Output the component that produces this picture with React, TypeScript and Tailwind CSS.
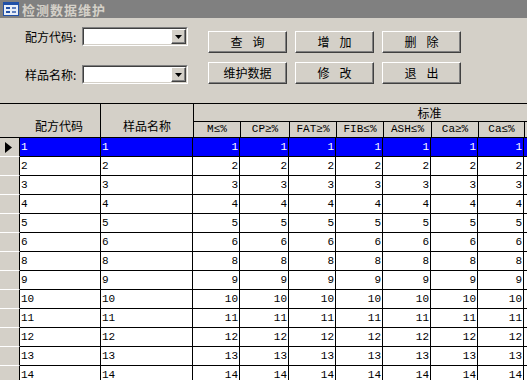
import React from "react";

const rows = [1, 2, 3, 4, 5, 6, 8, 9, 10, 11, 12, 13, 14];
const subCols = [
  { label: "M≤%", w: "w-[47px]" },
  { label: "CP≥%", w: "w-[49px]" },
  { label: "FAT≥%", w: "w-[47px]" },
  { label: "FIB≤%", w: "w-[47px]" },
  { label: "ASH≤%", w: "w-[48px]" },
  { label: "Ca≥%", w: "w-[47px]" },
  { label: "Ca≤%", w: "w-[46px]" },
];

const cjk = "font-['SimSun','Noto_Sans_CJK_SC',sans-serif]";
const mono = "font-['Liberation_Mono','Noto_Sans_CJK_SC',monospace]";

function Combo({ label }: { label: string }) {
  return (
    <div className="flex items-center h-[19px]">
      <span className={`w-[57px] text-[12px] leading-none text-black ${cjk}`}>{label}</span>
      <div className="w-[106px] h-[19px] border border-t-[#808080] border-l-[#808080] border-b-white border-r-white">
        <div className="h-full flex border border-t-[#404040] border-l-[#404040] border-b-[#d4d0c8] border-r-[#d4d0c8] bg-white">
          <div className="flex-1" />
          <div className="w-[15px] h-full bg-[#d4d0c8] border border-t-white border-l-white border-b-[#404040] border-r-[#404040] shadow-[inset_-1px_-1px_0_#808080] flex items-center justify-center">
            <svg width="7" height="4" viewBox="0 0 7 4">
              <polygon points="0,0 7,0 3.5,4" fill="#000" />
            </svg>
          </div>
        </div>
      </div>
    </div>
  );
}

function Btn({ text }: { text: string }) {
  const chars = text.length === 2 ? text.split("") : [text];
  return (
    <button className={`w-[79px] h-[22px] bg-[#d4d0c8] border border-t-white border-l-white border-b-[#404040] border-r-[#404040] shadow-[inset_-1px_-1px_0_#808080] text-[12px] leading-none text-black flex items-center justify-center gap-[10px] ${cjk}`}>
      {chars.map((c) => (
        <span key={c}>{c}</span>
      ))}
    </button>
  );
}

export default function App() {
  return (
    <div className="w-[527px] h-[380px] overflow-hidden bg-[#d4d0c8] flex flex-col">
      {/* title bar */}
      <div className="h-[18px] bg-[#808080] flex items-center pl-[3px] gap-[3px] shrink-0">
        <svg width="16" height="14" viewBox="0 0 16 14">
          <rect x="0.5" y="0.5" width="15" height="13" fill="#e8eef8" stroke="#2050a8" />
          <rect x="1" y="1" width="14" height="2" fill="#2050a8" />
          <rect x="3" y="5" width="4" height="2" fill="#2050a8" />
          <rect x="3" y="9" width="4" height="2" fill="#2050a8" />
          <rect x="9" y="5" width="4" height="2" fill="#6080c0" />
          <rect x="9" y="9" width="4" height="2" fill="#6080c0" />
        </svg>
        <span className={`text-[13px] font-bold leading-none tracking-[1px] text-[#d4d0c8] ${cjk}`}>检测数据维护</span>
      </div>

      {/* form */}
      <div className="h-[85px] flex shrink-0">
        <div className="pt-[9px] pl-[25px] flex flex-col gap-[19px]">
          <Combo label="配方代码:" />
          <Combo label="样品名称:" />
        </div>
        <div className="ml-[20px] pt-[13px] grid grid-cols-[79px_79px_79px] gap-x-[8px] gap-y-[9px] h-fit">
          <Btn text="查询" />
          <Btn text="增加" />
          <Btn text="删除" />
          <Btn text="维护数据" />
          <Btn text="修改" />
          <Btn text="退出" />
        </div>
      </div>

      {/* datasheet */}
      <div className="flex-1 border-t border-black bg-white">
        <div className="flex h-[34px] bg-[#d4d0c8] border-b border-black">
          <div className={`w-[101px] shrink-0 border-r border-black flex items-end justify-center pb-[5px] pl-[18px] text-[12px] leading-none ${cjk}`}>
            配方代码
          </div>
          <div className={`w-[93px] shrink-0 border-r border-black flex items-end justify-center pb-[5px] text-[12px] leading-none ${cjk}`}>
            样品名称
          </div>
          <div className="flex-1 flex flex-col">
            <div className={`h-[18px] border-b border-black flex items-center justify-center pl-[138px] text-[12px] leading-none ${cjk}`}>
              标准
            </div>
            <div className="flex-1 flex">
              {subCols.map((c) => (
                <div
                  key={c.label}
                  className={`${c.w} shrink-0 border-r border-black flex items-center justify-center text-[11px] leading-none ${mono}`}
                >
                  {c.label}
                </div>
              ))}
              <div className="flex-1" />
            </div>
          </div>
        </div>

        {rows.map((r, i) => {
          const sel = i === 0;
          const cell = sel ? "bg-[#0000ff] text-white" : "bg-white text-black";
          return (
            <div key={r} className="flex h-[19px]">
              <div className="w-[20px] shrink-0 bg-[#d4d0c8] border-r border-black border-b border-b-white flex items-center pl-[5px]">
                {sel && (
                  <svg width="7" height="11" viewBox="0 0 7 11">
                    <polygon points="0,0 7,5.5 0,11" fill="#000" />
                  </svg>
                )}
              </div>
              <div className={`flex flex-1 border-b border-black ${cell} ${mono} text-[11px] leading-none`}>
                <div className="w-[81px] shrink-0 border-r border-black flex items-center pl-[1px]">{r}</div>
                <div className="w-[92px] shrink-0 border-r border-black flex items-center pl-[1px]">{r}</div>
                {subCols.map((c) => (
                  <div key={c.label} className={`${c.w} shrink-0 border-r border-black flex items-center justify-end pr-[1px]`}>
                    {r}
                  </div>
                ))}
                <div className="flex-1" />
              </div>
            </div>
          );
        })}
      </div>
    </div>
  );
}
